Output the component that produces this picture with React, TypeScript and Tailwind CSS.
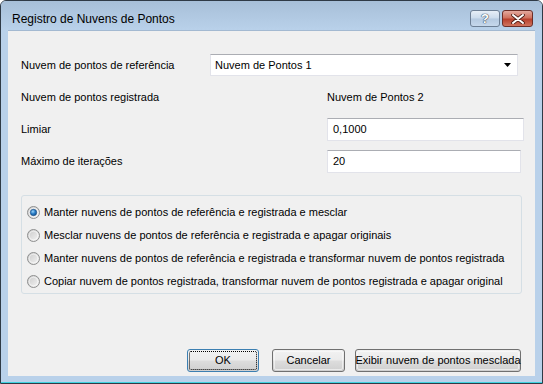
import React from "react"

const font = { fontFamily: "Tahoma, 'Liberation Sans', Arial, sans-serif" }

const Radio = ({ checked }: { checked?: boolean }) => (
  <svg width="13" height="13" viewBox="0 0 13 13" className="shrink-0">
    <defs>
      <linearGradient id="rbg" x1="0" y1="0" x2="1" y2="1">
        <stop offset="0" stopColor="#c8c8c8" />
        <stop offset="1" stopColor="#f6f6f6" />
      </linearGradient>
      <radialGradient id="rdot" cx="0.4" cy="0.35" r="0.7">
        <stop offset="0" stopColor="#9fd4f7" />
        <stop offset="0.5" stopColor="#2a7fc9" />
        <stop offset="1" stopColor="#124f8c" />
      </radialGradient>
    </defs>
    <circle cx="6.5" cy="6.5" r="6" fill="url(#rbg)" stroke="#8e8f8f" strokeWidth="1" />
    <circle cx="6.5" cy="6.5" r="4.3" fill="none" stroke="#ffffff" strokeOpacity="0.7" strokeWidth="0.8" />
    {checked && <circle cx="6.5" cy="6.5" r="3.2" fill="url(#rdot)" stroke="#1b4f86" strokeWidth="0.6" />}
  </svg>
)

const Button = ({ label, width, isDefault }: { label: string; width: string; isDefault?: boolean }) => (
  <div
    className={`${width} h-[23px] rounded-[3px] border ${
      isDefault ? "border-[#3c7fb1]" : "border-[#707070]"
    } bg-[linear-gradient(#f2f2f2_0%,#ebebeb_48%,#dddddd_52%,#cfcfcf_100%)] p-[1px] shrink-0`}
  >
    <div
      className={`flex h-full w-full items-center justify-center whitespace-nowrap rounded-[2px] ${
        isDefault ? "border border-dotted border-black" : "border border-[#fcfcfc]/60"
      } text-[11px] text-black`}
    >
      {label}
    </div>
  </div>
)

const options = [
  "Manter nuvens de pontos de referência e registrada e mesclar",
  "Mesclar nuvens de pontos de referência e registrada e apagar originais",
  "Manter nuvens de pontos de referência e registrada e transformar nuvem de pontos registrada",
  "Copiar nuvem de pontos registrada, transformar nuvem de pontos registrada e apagar original",
]

const App = () => {
  return (
    <div className="h-[384px] w-[543px] overflow-hidden bg-white" style={font}>
      <div className="flex h-full w-full flex-col rounded-t-[6px] border border-[#2f3a46] bg-[#b9d1ea]">
        {/* TITLE BAR */}
        <div className="flex h-[29px] shrink-0 items-start rounded-t-[5px] bg-[linear-gradient(#a7bfd8,#b9d1ea)]">
          <div className="ml-[11px] mt-[9px] text-[12px] text-black">Registro de Nuvens de Pontos</div>
          <div className="ml-auto mr-[9px] mt-[9px] flex gap-[2px]">
            <div className="flex h-[17px] w-[30px] items-center justify-center rounded-[3px] border border-[#6d7f95] bg-[linear-gradient(#e6eef7_0%,#cbdbec_48%,#b4c9e0_52%,#c6d8ec_100%)]">
              <span
                className="text-[13px] font-bold leading-none text-white"
                style={{ textShadow: "0 0 1px #3b4c60, 0 0 1px #3b4c60, 0 0 1px #3b4c60" }}
              >
                ?
              </span>
            </div>
            <div className="flex h-[17px] w-[31px] items-center justify-center rounded-[3px] border border-[#6c2e28] bg-[linear-gradient(#e3a99f_0%,#d0725f_45%,#b8402d_55%,#d0745f_100%)]">
              <svg width="14" height="10" viewBox="0 0 14 10">
                <path d="M2 1 L12 9 M12 1 L2 9" stroke="#4a1a14" strokeWidth="3.6" strokeLinecap="round" />
                <path d="M2 1 L12 9 M12 1 L2 9" stroke="#ffffff" strokeWidth="2" strokeLinecap="round" />
              </svg>
            </div>
          </div>
        </div>

        {/* CLIENT */}
        <div className="mx-[7px] mb-[6px] flex flex-1 flex-col border-t border-[#a3b9d1] bg-[#f0f0f0] text-[11px] text-black">
          <div className="mt-[23px] flex h-[22px] items-center pl-[13px]">
            <div className="w-[189px]">Nuvem de pontos de referência</div>
            <div className="flex h-[22px] w-[308px] items-center border border-[#e2e3ea] border-t-[#abadb3] bg-white pl-[4px]">
              <span>Nuvem de Pontos 1</span>
              <svg width="7" height="4" viewBox="0 0 7 4" className="ml-auto mr-[6px]">
                <path d="M0 0 H7 L3.5 4 Z" fill="#000" />
              </svg>
            </div>
          </div>

          <div className="mt-[10px] flex h-[22px] items-center pl-[13px]">
            <div className="w-[306px]">Nuvem de pontos registrada</div>
            <div>Nuvem de Pontos 2</div>
          </div>

          <div className="mt-[10px] flex h-[23px] items-center pl-[13px]">
            <div className="w-[306px]">Limiar</div>
            <div className="flex h-[23px] w-[197px] items-center border border-[#e2e3ea] border-t-[#abadb3] bg-white pl-[5px]">
              0,1000
            </div>
          </div>

          <div className="mt-[9px] flex h-[23px] items-center pl-[13px]">
            <div className="w-[306px]">Máximo de iterações</div>
            <div className="flex h-[23px] w-[194px] items-center border border-[#e2e3ea] border-t-[#abadb3] bg-white pl-[5px]">
              20
            </div>
          </div>

          {/* OPTIONS */}
          <div className="ml-[13px] mt-[22px] h-[99px] w-[501px] rounded-[3px] border border-[#d5dfe5] pt-[5px]">
            {options.map((option, i) => (
              <div key={option} className="flex h-[23px] items-center gap-[4px] pl-[5px]">
                <Radio checked={i === 0} />
                <span>{option}</span>
              </div>
            ))}
          </div>

          {/* BUTTONS */}
          <div className="mb-[4px] mt-auto flex pl-[179px]">
            <Button label="OK" width="w-[72px]" isDefault />
            <div className="ml-[13px]">
              <Button label="Cancelar" width="w-[73px]" />
            </div>
            <div className="ml-[10px]">
              <Button label="Exibir nuvem de pontos mesclada" width="w-[166px]" />
            </div>
          </div>
        </div>
        <div className="h-px shrink-0 bg-[#3fd3e0]" />
      </div>
    </div>
  )
}

export default App
